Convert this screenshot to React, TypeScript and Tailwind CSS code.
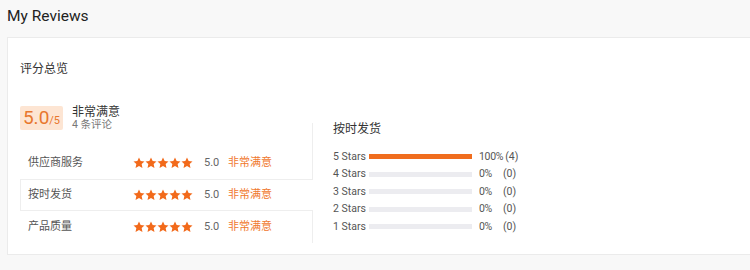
import React from "react";

const font = "font-['Roboto','Noto_Sans_CJK_SC',sans-serif]";

function Star() {
    return (
        <svg viewBox="0 0 24 24" className="h-[12px] w-[12px]">
            <path
                fill="#f26a1b"
                d="M12 1l3.3 7 7.7.9-5.7 5.3 1.6 7.7L12 18l-6.9 3.9 1.6-7.7L1 8.9l7.7-.9z"
            />
        </svg>
    );
}

function RatingRow({ label }: { label: string }) {
    return (
        <div className="flex items-center text-[11px]">
            <span className="w-[105px] text-[#555]">{label}</span>
            <div className="flex">
                {[0, 1, 2, 3, 4].map((i) => (
                    <Star key={i} />
                ))}
            </div>
            <span className="ml-[11px] w-[24px] text-[#666]">5.0</span>
            <span className="text-[#f0782e]">非常满意</span>
        </div>
    );
}

const dist = [
    { stars: 5, pct: 100, count: 4 },
    { stars: 4, pct: 0, count: 0 },
    { stars: 3, pct: 0, count: 0 },
    { stars: 2, pct: 0, count: 0 },
    { stars: 1, pct: 0, count: 0 },
];

export default function App() {
    return (
        <div className={`${font} min-h-[270px] bg-[#f8f8f8] pl-[7px] text-[#333]`}>
            <div className="h-[37px] pt-[4px] text-[15.5px] leading-6 text-[#222]">My Reviews</div>
            <div className="border-y border-l border-[#ebebeb] bg-white px-[12px] pt-[22px] pb-[11px]">
                <div className="text-[12px] leading-[18px]">评分总览</div>

                <div className="mt-[28px] -mb-[7px] flex h-[24px] items-center">
                    <div className="flex h-[24px] w-[43px] items-end justify-center rounded-[2px] bg-[#fde5d3] pb-[2px] text-[#e8772e]">
                        <span className="text-[19px] leading-[20px]">5.0</span>
                        <span className="mb-[1px] text-[11px] leading-[12px]">/5</span>
                    </div>
                    <div className="ml-[9px] flex flex-col">
                        <span className="text-[12px] leading-[13px] text-[#333]">非常满意</span>
                        <span className="text-[10.5px] leading-[12px] text-[#777]">4 条评论</span>
                    </div>
                </div>

                <div className="flex">
                    <div className="flex w-[293px] flex-col">
                        <div className="flex h-[56px] items-center border-r border-[#eeeeee] pt-[24px] pl-[8px]">
                            <RatingRow label="供应商服务" />
                        </div>
                        <div className="flex h-[32px] items-center border-y border-l border-[#eeeeee] pl-[7px]">
                            <RatingRow label="按时发货" />
                        </div>
                        <div className="flex h-[32px] items-center border-r border-[#eeeeee] pl-[8px]">
                            <RatingRow label="产品质量" />
                        </div>
                    </div>

                    <div className="flex-1 pl-[20px]">
                        <div className="text-[12px] leading-[12px]">按时发货</div>
                        <div className="mt-[13px] flex flex-col">
                            {dist.map((d) => (
                                <div key={d.stars} className="flex h-[17.5px] items-center text-[10.5px] text-[#555]">
                                    <span className="w-[36px]">{d.stars} Stars</span>
                                    <div className="h-[5px] w-[103px] bg-[#ececf0]">
                                        <div className="h-full bg-[#f06d1e]" style={{ width: `${d.pct}%` }} />
                                    </div>
                                    <span className="ml-[7px] mr-[2px] min-w-[22px] tracking-[-0.3px]">{d.pct}%</span>
                                    <span>({d.count})</span>
                                </div>
                            ))}
                        </div>
                    </div>
                </div>
            </div>
        </div>
    );
}
